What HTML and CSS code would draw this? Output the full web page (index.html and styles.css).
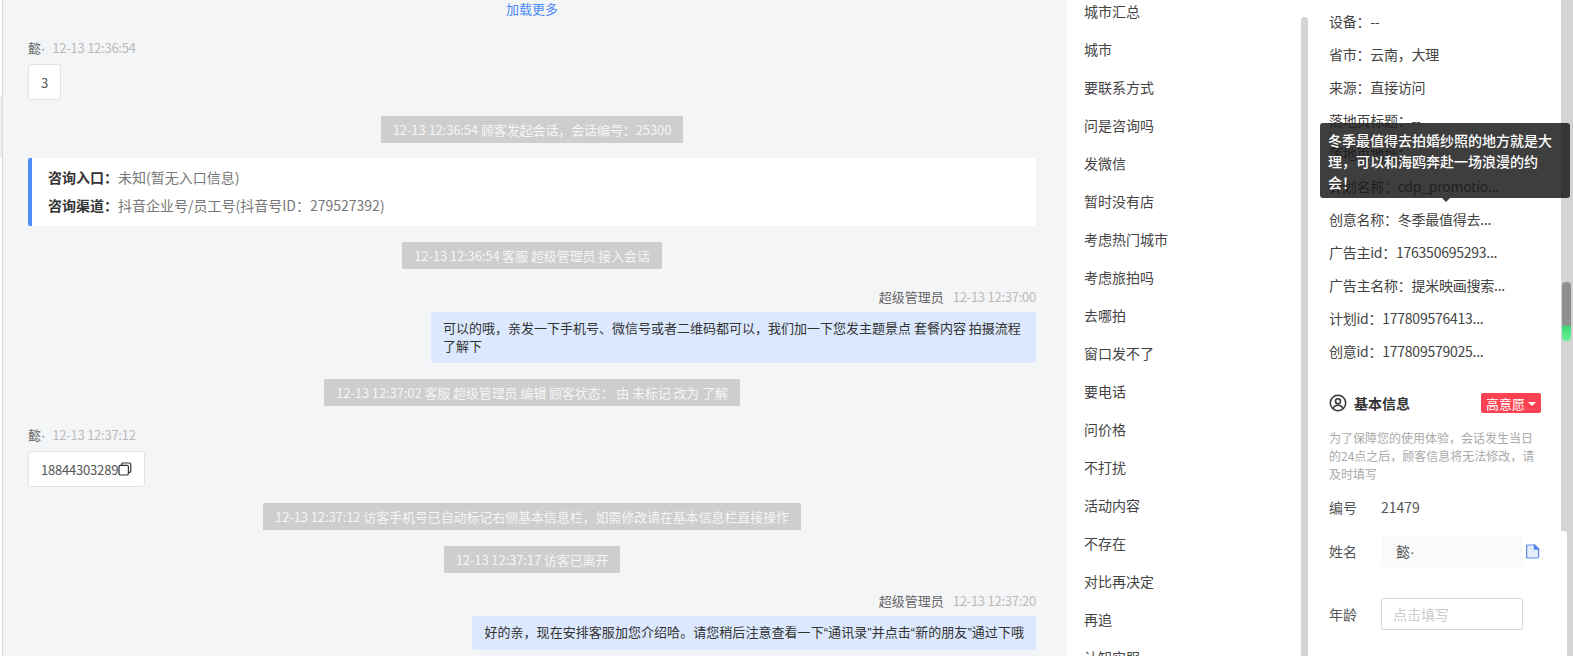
FILE: index.html
```html
<!DOCTYPE html>
<html lang="zh-CN">
<head>
<meta charset="utf-8">
<title>会话详情</title>
<link rel="stylesheet" href="styles.css">
</head>
<body>
<div class="app">
  <div class="edge"><div class="edge-mark"></div></div>
  <main class="chat">
    <div class="load-more">加载更多</div>

    <div class="head first"><span class="who">懿<span class="nar">·</span></span><span class="time">12-13 12:36:54</span></div>
    <div class="visitor-msg">3</div>

    <div class="sys-row"><span class="sys">12-13 12:36:54 顾客发起会话，会话编号：25300</span></div>

    <div class="entry">
      <div class="entry-row"><b>咨询入口：</b>未知(暂无入口信息)</div>
      <div class="entry-row"><b>咨询渠道：</b>抖音企业号/员工号(抖音号ID：279527392)</div>
    </div>

    <div class="sys-row"><span class="sys">12-13 12:36:54 客服 超级管理员 接入会话</span></div>

    <div class="head right"><span class="who">超级管理员</span><span class="time">12-13 12:37:00</span></div>
    <div class="bubble-row"><div class="bubble">可以的哦，亲发一下手机号、微信号或者二维码都可以，我们加一下您发主题景点 套餐内容 拍摄流程了解下</div></div>

    <div class="sys-row"><span class="sys">12-13 12:37:02 客服 超级管理员 编辑 顾客状态： 由 未标记 改为 了解</span></div>

    <div class="head"><span class="who">懿<span class="nar">·</span></span><span class="time">12-13 12:37:12</span></div>
    <div class="visitor-msg phone">18844303289<svg class="copy" viewBox="0 0 14 14" width="14" height="14" fill="none" stroke="#333" stroke-width="1.2"><rect x="1" y="3.4" width="9.4" height="9.6" rx="1.4"/><path d="M3.6 3.2V2.2q0-1.2 1.2-1.2h6.8q1.2 0 1.2 1.2v7q0 1.2-1.2 1.2h-1"/></svg></div>

    <div class="sys-row"><span class="sys">12-13 12:37:12 访客手机号已自动标记右侧基本信息栏，如需修改请在基本信息栏直接操作</span></div>
    <div class="sys-row"><span class="sys">12-13 12:37:17 访客已离开</span></div>

    <div class="head right"><span class="who">超级管理员</span><span class="time">12-13 12:37:20</span></div>
    <div class="bubble-row"><div class="bubble wide">好的亲，现在安排客服加您介绍哈。请您稍后注意查看一下<span class="nar">“</span>通讯录<span class="nar">”</span>并点击<span class="nar">“</span>新的朋友<span class="nar">”</span>通过下哦</div></div>
  </main>

  <aside class="quick">
    <ul class="quick-list">
      <li>城市汇总</li><li>城市</li><li>要联系方式</li><li>问是咨询吗</li><li>发微信</li><li>暂时没有店</li>
      <li>考虑热门城市</li><li>考虑旅拍吗</li><li>去哪拍</li><li>窗口发不了</li><li>要电话</li><li>问价格</li>
      <li>不打扰</li><li>活动内容</li><li>不存在</li><li>对比再决定</li><li>再追</li><li>认知实服</li>
    </ul>
  </aside>
  <div class="mid-scroll"></div>

  <aside class="info">
    <ul class="meta">
      <li>设备：--</li>
      <li>省市：云南，大理</li>
      <li>来源：直接访问</li>
      <li>落地页标题：--</li>
      <li>落地页地址：</li>
      <li>计划名称：cdp_promotio...</li>
      <li>创意名称：冬季最值得去...</li>
      <li>广告主id：176350695293...</li>
      <li>广告主名称：提米映画搜索...</li>
      <li>计划id：177809576413...</li>
      <li>创意id：177809579025...</li>
    </ul>

    <div class="basic-head">
      <svg class="user-icon" viewBox="0 0 18 18" width="18" height="18" fill="none" stroke="#333" stroke-width="1.5"><circle cx="9" cy="9" r="7.7"/><circle cx="9" cy="7.2" r="2.5"/><path d="M4.2 14.6c.6-2.4 2.5-3.4 4.8-3.4s4.2 1 4.8 3.4"/></svg>
      <span class="basic-title">基本信息</span>
      <span class="tag">高意愿<i class="caret"></i></span>
    </div>
    <p class="notice">为了保障您的使用体验，会话发生当日的24点之后，顾客信息将无法修改，请及时填写</p>

    <div class="field id-field"><span class="label">编号</span><span class="value">21479</span></div>
    <div class="field name-field"><span class="label">姓名</span><div class="input filled">懿<span class="nar">·</span></div>
      <svg class="doc-icon" viewBox="0 0 14 15" width="14" height="15" fill="#e4edfc" stroke="#5f8bea" stroke-width="1.2"><path d="M1.6 1h7.2L12.6 4.8V13q0 1-1 1H1.6q-1 0-1-1V2q0-1 1-1z"/><path d="M8.4 1v4.2h4.2z" fill="#3f73e4"/></svg>
    </div>
    <div class="field age-field"><span class="label">年龄</span><div class="input empty">点击填写</div></div>
  </aside>

  <div class="side-scroll"><div class="thumb"></div><div class="side-gap"></div></div>

  <div class="tooltip">冬季最值得去拍婚纱照的地方就是大理，可以和海鸥奔赴一场浪漫的约会！<i class="tip-arrow"></i></div>
</div>
</body>
</html>
```

FILE: styles.css
```css
* { box-sizing: border-box; }
html, body { margin: 0; height: 100%; overflow: hidden; }
body { background: #fff; font-family: "Noto Sans CJK SC", "Noto Sans", sans-serif; color: #333; }
ul { list-style: none; margin: 0; padding: 0; }
p { margin: 0; }

.app { display: flex; width: 1573px; height: 656px; position: relative; overflow: hidden; }
.nar { font-family: "Liberation Sans", sans-serif; }

.edge { width: 3px; flex: none; background: #fff; border-right: 1px solid #d9dadd; }
.edge-mark { height: 62px; margin-top: 96px; background: #eceded; }

.chat { width: 1064px; flex: none; padding: 0 31px 0 25px; background: #f4f5f7; overflow: hidden; }
.load-more { text-align: center; color: #4a8af4; font-size: 13px; line-height: 17px; }

.head { font-size: 13px; line-height: 18px; margin-top: 20px; white-space: nowrap; }
.head.first { margin-top: 22px; }
.head.right { text-align: right; margin-top: 19px; }
.who { color: #666; margin-right: 7px; }
.head.right .who { margin-right: 9px; }
.time { color: #bbb; letter-spacing: -.25px; }

.visitor-msg { display: inline-flex; align-items: center; height: 36px; padding: 0 12px; margin-top: 6px; background: #fff; border: 1px solid #e2e3e6; border-radius: 3px; font-size: 13px; color: #555; vertical-align: top; }
.phone { letter-spacing: -.2px; }

.sys-row { text-align: center; margin-top: 16px; line-height: 0; }
.sys { display: inline-block; height: 27px; padding: 0 12px; line-height: 27px; background: #cecece; color: #f5f5f5; font-size: 13px; letter-spacing: -.1px; border-radius: 1px; white-space: nowrap; }

.entry { margin-top: 15px; height: 68px; padding: 5px 16px; background: #fff; border-left: 4px solid #4e8cf8; border-radius: 2px; font-size: 14px; color: #777; }
.entry-row { line-height: 28px; }
.entry b { color: #333; font-weight: 700; }

.bubble-row { display: flex; justify-content: flex-end; margin-top: 6px; }
.bubble { width: fit-content; max-width: 605px; padding: 7px 12px 8px; background: #dbe8fd; border-radius: 3px; font-size: 13px; line-height: 18px; color: #333; }
.bubble.wide { letter-spacing: .05px; }

.quick { width: 234px; flex: none; padding-left: 17px; background: #fff; }
.quick-list { margin-top: -8px; }
.quick-list li { height: 38px; line-height: 38px; font-size: 14px; color: #444; white-space: nowrap; }

.mid-scroll { width: 7px; flex: none; margin-top: 17px; background: #d4d4d4; border-radius: 3px 3px 0 0; }

.info { width: 253px; flex: none; padding: 0 20px 0 21px; background: #fff; }
.meta { margin-top: 5px; }
.meta li { height: 33px; line-height: 33px; font-size: 14px; letter-spacing: -.25px; color: #444; white-space: nowrap; }

.basic-head { display: flex; align-items: center; margin-top: 25px; height: 20px; }
.user-icon { margin-right: 7px; }
.basic-title { font-size: 14px; font-weight: 700; color: #333; }
.tag { margin-left: auto; width: 60px; height: 20px; display: flex; align-items: center; justify-content: center; background: #fb4252; color: #fff; border-radius: 2px; font-size: 13px; }
.caret { margin-left: 3px; margin-top: 1px; border: 4px solid transparent; border-top-color: #fff; border-bottom: 0; }

.notice { margin-top: 16px; font-size: 12px; line-height: 18px; color: #aaa; }

.field { display: flex; align-items: center; font-size: 14px; color: #555; }
.id-field { margin-top: 14px; height: 20px; }
.name-field { margin-top: 18px; }
.age-field { margin-top: 31px; }
.label { width: 52px; flex: none; }
.value { color: #555; }
.input { width: 142px; height: 32px; padding: 0 15px; line-height: 32px; border-radius: 2px; }
.filled { background: #fafafa; color: #555; }
.empty { border: 1px solid #d9d9d9; color: #ccc; line-height: 30px; padding: 0 11px; }
.doc-icon { margin-left: 3px; flex: none; }

.side-scroll { flex: 1; background: #d4d4d4; padding-top: 282px; }
.thumb { width: 9px; height: 59px; margin-left: 1px; border-radius: 4px; background: linear-gradient(180deg, #8f8f8f 0, #8f8f8f 72%, #3ddc74 76%, #6fef9a 100%); }
.side-gap { width: 6px; height: 125px; margin-top: 190px; background: #fff; border-radius: 0 3px 0 0; }

.tooltip { position: absolute; left: 1320px; top: 123px; width: 250px; height: 75px; padding: 7px 8px; background: rgba(25,25,25,.84); color: #fff; border-radius: 3px; font-size: 14px; font-weight: 500; line-height: 21px; }
.tip-arrow { position: absolute; left: 122px; bottom: -4px; border: 4px solid transparent; border-top-color: #3a3a3a; border-bottom: 0; }
```
